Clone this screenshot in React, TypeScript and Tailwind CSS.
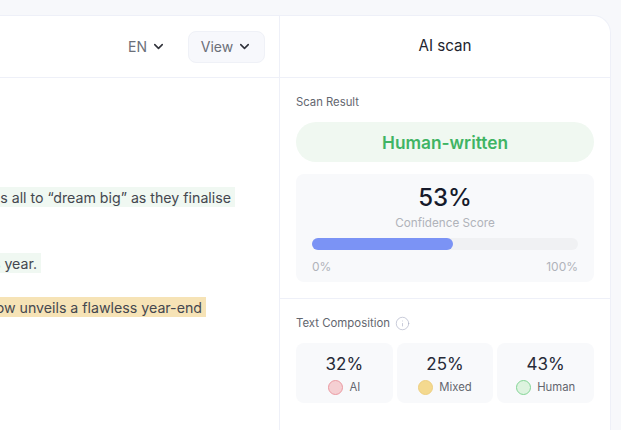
import { ChevronDown, Info } from 'lucide-react';

const parts = [
  { value: '32%', label: 'AI', dot: 'bg-[#f5cfd2] border-[#eb9aa2]' },
  { value: '25%', label: 'Mixed', dot: 'bg-[#f4d98f] border-[#eecf80]' },
  { value: '43%', label: 'Human', dot: 'bg-[#ddf3df] border-[#84d596]' },
];

const App = () => (
  <div className="h-[430px] w-[621px] overflow-hidden bg-[#f7f8fb] pt-[15px] font-['Inter',sans-serif]">
    <div className="flex h-[440px] w-[611px] rounded-tr-[18px] border-t border-r border-[#eef0f8] bg-white">
      {/* editor column, cut off by the left edge of the window */}
      <div className="w-[280px] shrink-0 border-r border-[#eef0f8]">
        <div className="flex h-[62px] items-center justify-end border-b border-[#eef0f8] pr-[14px]">
          <button className="mr-[22px] flex items-center gap-[4px] text-[14px] text-[#6b6f78]">
            EN
            <ChevronDown size={15} strokeWidth={2.5} className="text-[#30323a]" />
          </button>
          <button className="flex h-[32px] w-[77px] items-center justify-center gap-[4px] rounded-[8px] border border-[#eff1f7] bg-[#f7f8fc] text-[14px] text-[#6b6f78]">
            View
            <ChevronDown size={15} strokeWidth={2.5} className="text-[#30323a]" />
          </button>
        </div>
        <div className="flex flex-col text-[14.2px] leading-[18px] whitespace-nowrap text-[#44474f]">
          <div className="mt-[109px] flex justify-end pr-[44px]">
            <span className="bg-[#f0f8f2] pt-[2px] pl-[6px] pr-[4px]">s all to “dream big” as they finalise</span>
          </div>
          <div className="mt-[46px] flex justify-end pr-[238px]">
            <span className="bg-[#f0f8f2] pt-[2px] pl-[6px] pr-[4px]">s year.</span>
          </div>
          <div className="mt-[24px] flex justify-end pr-[73px]">
            <span className="bg-[#f6e3b6] pt-[2px] pl-[6px] pr-[4px]">ow unveils a flawless year-end</span>
          </div>
        </div>
      </div>

      {/* scan panel */}
      <div className="flex min-w-0 flex-1 flex-col">
        <div className="flex h-[62px] shrink-0 items-center justify-center border-b border-[#eef0f8] text-[15.2px] text-[#23252e]">
          AI scan
        </div>
        <div className="flex flex-col border-b border-[#eef0f8] px-[16px] pt-[17px] pb-[16px]">
          <div className="text-[11.3px] leading-[14px] text-[#63666e]">Scan Result</div>
          <div className="mt-[13px] flex h-[40px] items-center justify-center rounded-full bg-[#f0f8f1] pt-[1px] text-[17.3px] font-semibold text-[#3fb464]">
            Human-written
          </div>
          <div className="mt-[12px] flex h-[108px] flex-col rounded-[8px] bg-[#f8f9fb] px-[16px] pt-[10px]">
            <div className="text-center text-[24px] leading-[28px] font-medium text-[#161a2b]">53%</div>
            <div className="mt-[3px] text-center text-[11.7px] leading-[16px] text-[#b0b3ba]">Confidence Score</div>
            <div className="mt-[7px] h-[12px] rounded-full bg-[#f0f1f3]">
              <div className="h-full w-[53%] rounded-full bg-[#7b93f5]" />
            </div>
            <div className="mt-[9px] flex justify-between text-[12px] leading-[16px] text-[#b0b3ba]">
              <span>0%</span>
              <span>100%</span>
            </div>
          </div>
        </div>
        <div className="flex flex-col px-[16px] pt-[17px]">
          <div className="flex h-[15px] items-center gap-[5px] text-[11.4px] text-[#63666e]">
            Text Composition
            <Info size={15} strokeWidth={1} className="text-[#a9adc4]" />
          </div>
          <div className="mt-[12px] grid grid-cols-3 gap-[4px]">
            {parts.map((p) => (
              <div key={p.label} className="flex h-[60px] flex-col items-center justify-center rounded-[8px] bg-[#f8f9fb] pt-[1px]">
                <div className="text-[17px] leading-[22px] text-[#272a38]">{p.value}</div>
                <div className="mt-[5px] flex items-center gap-[6px] text-[11.3px] leading-[14px] text-[#63666e]">
                  <span className={`h-[15px] w-[15px] rounded-full border ${p.dot}`} />
                  {p.label}
                </div>
              </div>
            ))}
          </div>
        </div>
      </div>
    </div>
  </div>
);

export default App;
